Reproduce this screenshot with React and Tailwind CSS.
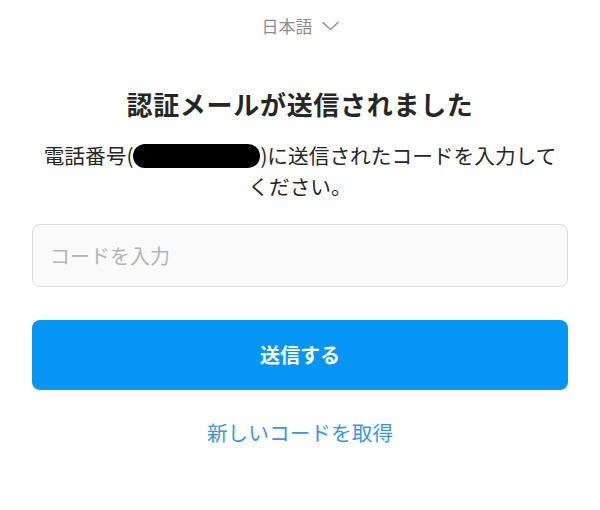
const JP = { fontFamily: '"Noto Sans CJK JP", "Noto Sans", sans-serif' };

function Chevron() {
  return (
    <svg width="17" height="10" viewBox="0 0 17 10" fill="none" className="ml-[9px]">
      <path d="M1 1.5 L8.5 8.5 L16 1.5" stroke="#8e8e8e" strokeWidth="1.4" strokeLinecap="round" strokeLinejoin="round" />
    </svg>
  );
}

export default function App() {
  return (
    <main className="w-[600px] h-[510px] bg-white px-[32px] pt-[14px] text-[#262626]" style={JP}>
      {/* language picker */}
      <div className="flex items-center justify-center h-[24px] text-[17px] leading-[24px] text-[#8e8e8e]">
        <span>日本語</span>
        <Chevron />
      </div>

      <h1 className="mt-[50px] text-center text-[26px] leading-[32px] font-bold tracking-[0.7px]">
        認証メールが送信されました
      </h1>

      <p className="mt-[20px] px-[4px] text-center text-[20.7px] leading-[31px]">
        電話番号(
        <span className="inline-block align-[-4px] w-[127px] h-[24px] bg-black rounded-[12px]" />
        )に送信されたコードを入力してください。
      </p>

      <input
        type="text"
        placeholder="コードを入力"
        className="mt-[22px] block w-full h-[63px] rounded-[8px] border border-[#dbdbdb] bg-[#fafafa] px-[17px] text-[20px] placeholder:text-[#b4b4b4] outline-none"
        style={JP}
      />

      <button
        className="mt-[33px] block w-full h-[70px] rounded-[8px] bg-[#0795f4] text-white text-[20px] font-bold"
        style={JP}
      >
        送信する
      </button>

      <div className="mt-[28px] text-center text-[20.7px] leading-[28px] text-[#3a97dc]">
        新しいコードを取得
      </div>
    </main>
  );
}
